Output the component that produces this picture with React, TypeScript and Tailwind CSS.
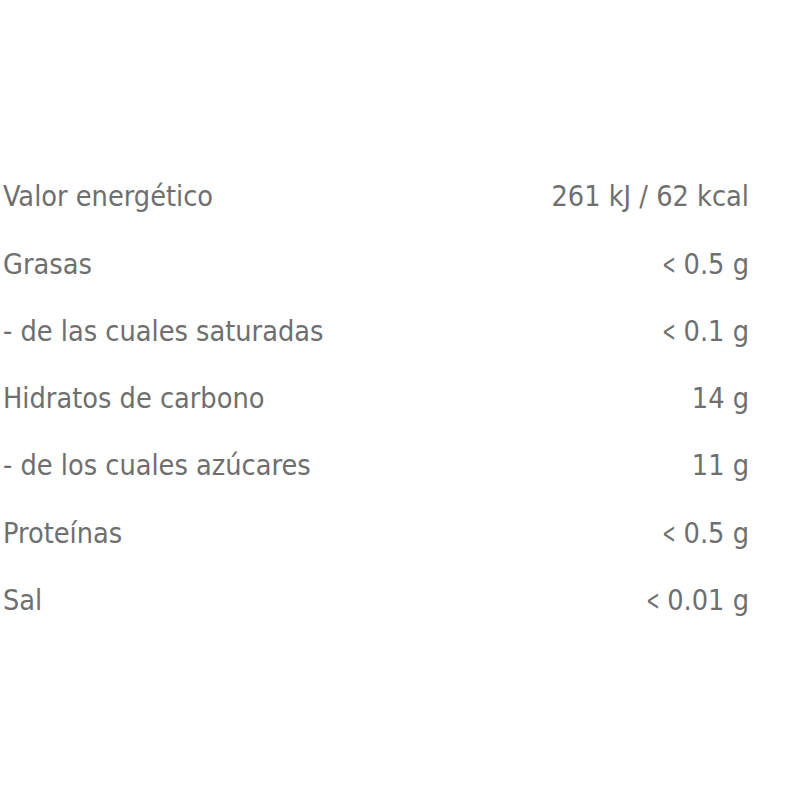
const rows: [string, string][] = [
  ['Valor energético', '261 kJ / 62 kcal'],
  ['Grasas', '< 0.5 g'],
  ['- de las cuales saturadas', '< 0.1 g'],
  ['Hidratos de carbono', '14 g'],
  ['- de los cuales azúcares', '11 g'],
  ['Proteínas', '< 0.5 g'],
  ['Sal', '< 0.01 g'],
];

// DejaVu's "<" is much wider than the reference glyph, so squeeze it
function Value({ text }: { text: string }) {
  if (!text.startsWith('<')) return <span>{text}</span>;
  return (
    <span>
      <span className="inline-block scale-x-[0.62] origin-right -ml-[8px]">&lt;</span>
      {text.slice(1)}
    </span>
  );
}

export default function App() {
  return (
    <div className="w-[800px] h-[800px] bg-white pt-[163px] pl-[3px] pr-[51px]">
      <div className="flex flex-col text-[#6f6f6f] text-[28.6px] font-['DejaVu_Sans_Condensed','Liberation_Sans_Narrow',sans-serif]">
        {rows.map(([k, v]) => (
          <div key={k} className="flex justify-between items-center h-[67.3px]">
            <span>{k}</span>
            <Value text={v} />
          </div>
        ))}
      </div>
    </div>
  );
}
